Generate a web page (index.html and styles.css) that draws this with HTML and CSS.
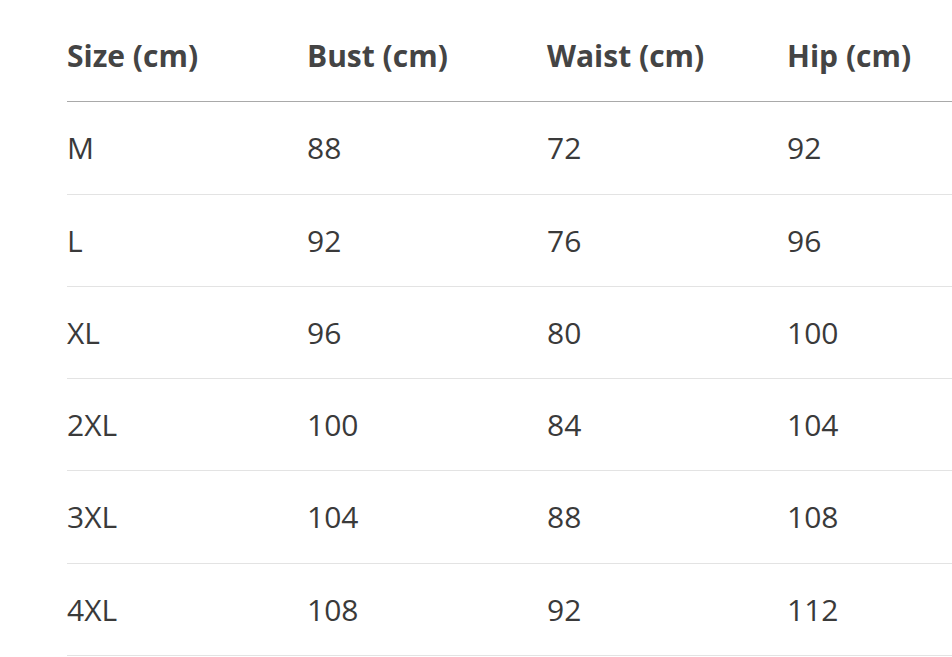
FILE: index.html
```html
<!DOCTYPE html>
<html lang="en">
<head>
<meta charset="utf-8">
<title>Size chart</title>
<link rel="stylesheet" href="styles.css">
</head>
<body>
<div class="wrap">
  <table class="size-table">
    <colgroup>
      <col class="col-fixed"><col class="col-fixed"><col class="col-fixed"><col>
    </colgroup>
    <thead>
      <tr><th>Size (cm)</th><th>Bust (cm)</th><th>Waist (cm)</th><th>Hip (cm)</th></tr>
    </thead>
    <tbody>
      <tr><td>M</td><td>88</td><td>72</td><td>92</td></tr>
      <tr><td>L</td><td>92</td><td>76</td><td>96</td></tr>
      <tr><td>XL</td><td>96</td><td>80</td><td>100</td></tr>
      <tr><td>2XL</td><td>100</td><td>84</td><td>104</td></tr>
      <tr><td>3XL</td><td>104</td><td>88</td><td>108</td></tr>
      <tr><td>4XL</td><td>108</td><td>92</td><td>112</td></tr>
    </tbody>
  </table>
</div>
</body>
</html>
```
FILE: styles.css
```css
html, body {
  margin: 0;
  padding: 0;
  background: #ffffff;
}
.wrap {
  padding: 10px 0 0 67px;
}
.size-table {
  border-collapse: collapse;
  table-layout: fixed;
  width: 100%;
  font-family: "Open Sans", "Noto Sans", sans-serif;
  font-size: 30px;
  color: #3a3a3a;
}
.col-fixed {
  width: 240px;
}
.size-table th,
.size-table td {
  text-align: left;
  padding: 24px 0;
  line-height: 43.3px;
  white-space: nowrap;
}
.size-table th {
  font-weight: 700;
  color: #444444;
  border-bottom: 1px solid #a9a9a9;
}
.size-table td {
  font-weight: 400;
  border-bottom: 1px solid #e3e3e3;
}
```
